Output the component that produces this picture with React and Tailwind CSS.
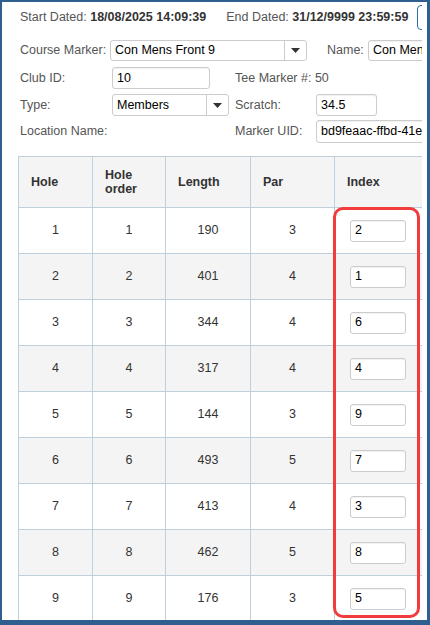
import React from 'react';

const holes = [
  { hole: 1, order: 1, length: 190, par: 3, index: 2 },
  { hole: 2, order: 2, length: 401, par: 4, index: 1 },
  { hole: 3, order: 3, length: 344, par: 4, index: 6 },
  { hole: 4, order: 4, length: 317, par: 4, index: 4 },
  { hole: 5, order: 5, length: 144, par: 3, index: 9 },
  { hole: 6, order: 6, length: 493, par: 5, index: 7 },
  { hole: 7, order: 7, length: 413, par: 4, index: 3 },
  { hole: 8, order: 8, length: 462, par: 5, index: 8 },
  { hole: 9, order: 9, length: 176, par: 3, index: 5 },
];

function Caret() {
  return (
    <svg width="9" height="5" viewBox="0 0 9 5" className="text-[#333]">
      <path d="M0 0h9L4.5 5z" fill="currentColor" />
    </svg>
  );
}

function SelectBox({ value, className }) {
  return (
    <div className={`flex h-full items-stretch rounded-[3px] border border-[#ccc] bg-white ${className}`}>
      <div className="flex flex-1 items-center overflow-hidden whitespace-nowrap pl-[4px] text-black">{value}</div>
      <div className="flex w-[22px] items-center justify-center border-l border-[#ccc]">
        <Caret />
      </div>
    </div>
  );
}

function TextBox({ value, className }) {
  return (
    <div className={`flex h-full items-center overflow-hidden whitespace-nowrap rounded-[3px] border border-[#ccc] bg-white pl-[4px] text-black shadow-[inset_0_1px_1px_rgba(0,0,0,0.06)] ${className}`}>
      {value}
    </div>
  );
}

export default function App() {
  return (
    <div className="h-[625px] w-[430px] bg-[#2f5f8e] pb-[5px] pl-[2px] pr-[3px] pt-[2px] font-['Liberation_Sans',Arial,sans-serif] text-[12.5px]">
      <div className="h-full bg-white pr-[5px]">
        <div className="relative h-full overflow-hidden pl-[16px]">
          {/* dates */}
          <div className="flex h-[30px] items-center whitespace-nowrap pl-[2px] text-[#555]">
            <span>Start Dated: <b className="text-[#333]">18/08/2025 14:09:39</b></span>
            <span className="ml-[20px]">End Dated: <b className="text-[#333]">31/12/9999 23:59:59</b></span>
            <div className="ml-[9px] h-[25px] w-[60px] shrink-0 rounded-[4px] border border-[#2e6da4]" />
          </div>

          {/* course marker */}
          <div className="mt-[8px] flex h-[21px] items-center whitespace-nowrap pl-[2px] text-[#555]">
            <span className="w-[90px] shrink-0">Course Marker:</span>
            <SelectBox value="Con Mens Front 9" className="w-[197px] shrink-0" />
            <span className="ml-[20px] w-[41px] shrink-0">Name:</span>
            <TextBox value="Con Mens Front 9" className="w-[120px] shrink-0" />
          </div>

          {/* details */}
          <div className="grid grid-cols-[92px_123px_81px_1fr] pl-[2px] text-[#555]">
            <div className="mt-[6px] flex h-[22px] items-center">Club ID:</div>
            <div className="mt-[6px] h-[22px]"><TextBox value="10" className="w-[98px]" /></div>
            <div className="col-span-2 mt-[6px] flex h-[22px] items-center">Tee Marker #: 50</div>

            <div className="mt-[5px] flex h-[22px] items-center">Type:</div>
            <div className="mt-[5px] h-[22px]"><SelectBox value="Members" className="w-[117px]" /></div>
            <div className="mt-[5px] flex h-[22px] items-center">Scratch:</div>
            <div className="mt-[5px] h-[22px]"><TextBox value="34.5" className="w-[61px]" /></div>

            <div className="mt-[4px] flex h-[23px] items-center">Location Name:</div>
            <div className="mt-[4px] h-[23px]" />
            <div className="mt-[4px] flex h-[23px] items-center">Marker UID:</div>
            <div className="mt-[4px] h-[23px]"><TextBox value="bd9feaac-ffbd-41e4-9a0c-3f2b" className="w-[140px]" /></div>
          </div>

          {/* holes table */}
          <table className="mt-[13px] w-[418px] table-fixed border-collapse text-[#333]">
            <colgroup>
              <col className="w-[74px]" />
              <col className="w-[73px]" />
              <col className="w-[85px]" />
              <col className="w-[84px]" />
              <col className="w-[102px]" />
            </colgroup>
            <thead>
              <tr className="h-[51px] bg-[#f4f4f4]">
                {['Hole', 'Hole order', 'Length', 'Par', 'Index'].map((h) => (
                  <th key={h} className="border border-[#bdd0dc] px-[12px] text-left font-bold leading-[14px]">
                    {h === 'Hole order' ? <>Hole<br />order</> : h}
                  </th>
                ))}
              </tr>
            </thead>
            <tbody>
              {holes.map((row, i) => (
                <tr key={row.hole} className={`h-[46px] ${i % 2 === 1 ? 'bg-[#f4f4f4]' : 'bg-white'}`}>
                  <td className="border border-[#bdd0dc] text-center">{row.hole}</td>
                  <td className="border border-[#bdd0dc] text-center">{row.order}</td>
                  <td className="border border-[#bdd0dc] text-center">{row.length}</td>
                  <td className="border border-[#bdd0dc] text-center">{row.par}</td>
                  <td className="border border-[#bdd0dc]">
                    <div className="ml-[15px] h-[22px]">
                      <TextBox value={row.index} className="w-[56px]" />
                    </div>
                  </td>
                </tr>
              ))}
            </tbody>
          </table>

          {/* highlight over index column */}
          <div className="pointer-events-none absolute left-[331px] top-[205px] h-[411px] w-[87px] rounded-[10px] border-[3px] border-[#f03c3c]" />
        </div>
      </div>
    </div>
  );
}
